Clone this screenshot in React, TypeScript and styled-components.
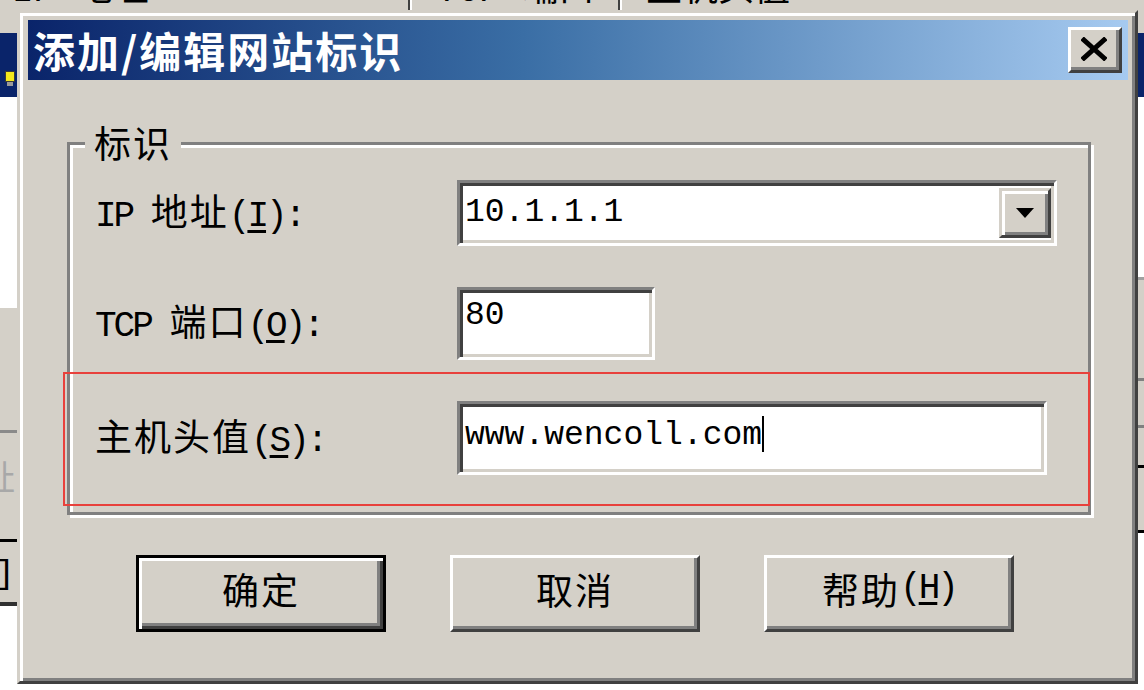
import styled, { createGlobalStyle } from 'styled-components'

const GlobalStyle = createGlobalStyle`
  html, body {
    margin: 0;
    padding: 0;
    background: #fff;
  }
  body {
    font-family: "Liberation Mono", "Noto Sans CJK SC", monospace;
  }
`

const Screen = styled.div`
  position: relative;
  width: 1144px;
  height: 690px;
  overflow: hidden;
  display: flex;
  flex-direction: column;
  background: #fff;
`

/* ---- the window behind the dialog ---- */

const HeaderStrip = styled.div`
  flex: 0 0 10px;
  display: flex;
  background: #d4d0c8;
  overflow: hidden;
`

const HeaderCell = styled.div<{ $w: number; $pad: number }>`
  flex: 0 0 ${p => p.$w}px;
  padding-left: ${p => p.$pad}px;
  box-sizing: border-box;
  font-size: 36px;
  line-height: 36px;
  margin-top: -26px;
  white-space: nowrap;
  color: #000;
`

const HeaderSep = styled.div`
  flex: 0 0 2px;
  background: #404040;
  border-right: 2px solid #fff;
`

const Below = styled.div`
  flex: 1;
  display: flex;
`

const Strip = styled.div<{ $w: number }>`
  flex: 0 0 ${p => p.$w}px;
  display: flex;
  flex-direction: column;
  overflow: hidden;
`

const Middle = styled.div`
  flex: 1;
  background: #fff;
`

const Band = styled.div<{ $h?: number; $bg: string }>`
  flex: ${p => (p.$h != null ? `0 0 ${p.$h}px` : '1 1 auto')};
  background: ${p => p.$bg};
  overflow: hidden;
  display: flex;
  justify-content: flex-end;
`

const TreeIcon = styled.div`
  width: 8px;
  height: 9px;
  margin: 38px 2px 0 0;
  background: #f4e81c;
  border: 1px solid #3a3a3a;
  box-shadow: 0 6px 0 -2px #9a9a9a;
`

const GhostGlyph = styled.span<{ $color: string; $top: number }>`
  font-size: 34px;
  line-height: 36px;
  margin-top: ${p => p.$top}px;
  margin-right: 2px;
  color: ${p => p.$color};
  white-space: nowrap;
`

/* ---- dialog ---- */

const Dialog = styled.div`
  position: absolute;
  left: 17px;
  top: 10px;
  width: 1121px;
  height: 674px;
  box-sizing: border-box;
  background: #d4d0c8;
  border: 3px solid;
  border-color: #d4d0c8 #404040 #404040 #d4d0c8;
  box-shadow: inset 3px 3px 0 #fff, inset -3px -3px 0 #808080;
  padding: 7px 7px 0 8px;
  display: flex;
  flex-direction: column;
`

const TitleBar = styled.div`
  height: 60px;
  flex-shrink: 0;
  display: flex;
  align-items: center;
  justify-content: space-between;
  padding: 0 6px 0 5px;
  background: linear-gradient(to right, #0a246a 0%, #3a6ea5 45%, #a6caf0 100%);
`

const TitleText = styled.div`
  font-family: "Noto Sans CJK SC", sans-serif;
  font-weight: 700;
  font-size: 42px;
  line-height: 48px;
  color: #fff;
  letter-spacing: 2px;
`

const CloseButton = styled.div`
  width: 54px;
  height: 46px;
  box-sizing: border-box;
  background: #d4d0c8;
  border: 3px solid;
  border-color: #fff #404040 #404040 #fff;
  box-shadow: inset -3px -3px 0 #808080;
  display: flex;
  align-items: center;
  justify-content: center;
  padding: 0 3px 3px 0;
`

const GroupBox = styled.div`
  position: relative;
  margin: 62px 37px 0 39px;
  height: 373px;
  box-sizing: border-box;
  border: 3px solid #808080;
  box-shadow: inset 3px 3px 0 #fff, 3px 3px 0 #fff;
  padding: 35px 0 0 25px;
  display: flex;
  flex-direction: column;
  gap: 41px;
`

const Legend = styled.div`
  position: absolute;
  left: 15px;
  top: -24px;
  padding: 0 9px;
  background: #d4d0c8;
  font-family: "Noto Sans CJK SC", sans-serif;
  font-size: 37px;
  line-height: 42px;
  letter-spacing: 2px;
  color: #000;
`

const Row = styled.div`
  display: grid;
  grid-template-columns: 362px auto;
  align-items: center;
`

const FieldLabel = styled.div`
  font-size: 36px;
  line-height: 42px;
  letter-spacing: -3px;
  color: #000;
  white-space: pre;
`

const Han = styled.span`
  font-family: "Noto Sans CJK SC", sans-serif;
  font-size: 37px;
  letter-spacing: 2px;
`

const Key = styled.span`
  text-decoration: underline;
  text-decoration-thickness: 3px;
  text-underline-offset: 4px;
`

const Sunken = styled.div<{ $w: number; $h: number; $padTop?: number }>`
  width: ${p => p.$w}px;
  height: ${p => p.$h}px;
  box-sizing: border-box;
  background: #fff;
  border: 3px solid;
  border-color: #808080 #fff #fff #808080;
  box-shadow: inset 3px 3px 0 #404040, inset -3px -3px 0 #d4d0c8;
  display: flex;
  align-items: ${p => (p.$padTop != null ? 'flex-start' : 'center')};
  padding: ${p => (p.$padTop != null ? `${p.$padTop}px 3px 0 5px` : '0 3px 0 5px')};
  font-size: 33px;
  line-height: 36px;
  color: #000;
  white-space: pre;
`

const Value = styled.span`
  flex: 1;
`

const Caret = styled.span`
  display: inline-block;
  width: 2px;
  height: 36px;
  margin-top: -2px;
  background: #000;
`

const DropButton = styled.div`
  width: 52px;
  height: 50px;
  box-sizing: border-box;
  background: #d4d0c8;
  border: 3px solid;
  border-color: #d4d0c8 #404040 #404040 #d4d0c8;
  box-shadow: inset 3px 3px 0 #fff, inset -3px -3px 0 #808080;
  display: flex;
  align-items: center;
  justify-content: center;
`

const Arrow = styled.div`
  width: 0;
  height: 0;
  border-left: 9px solid transparent;
  border-right: 9px solid transparent;
  border-top: 10px solid #000;
`

const ButtonRow = styled.div`
  display: flex;
  gap: 64px;
  margin-top: 40px;
  padding-left: 108px;
`

const PushButton = styled.div<{ $default?: boolean }>`
  width: 250px;
  height: 77px;
  box-sizing: border-box;
  background: #d4d0c8;
  border: 3px solid;
  border-color: ${p => (p.$default ? '#000' : '#fff #404040 #404040 #fff')};
  box-shadow: ${p =>
    p.$default
      ? 'inset 3px 3px 0 #fff, inset -3px -3px 0 #404040, inset -6px -6px 0 #808080'
      : 'inset -3px -3px 0 #808080'};
  display: flex;
  align-items: center;
  justify-content: center;
  padding-bottom: 10px;
  font-size: 36px;
  line-height: 42px;
  letter-spacing: -3px;
  color: #000;
  white-space: pre;
`

const Annotation = styled.div`
  position: absolute;
  left: 63px;
  top: 372px;
  width: 1027px;
  height: 134px;
  box-sizing: border-box;
  border: 2px solid #e8413c;
  pointer-events: none;
`

function Backdrop (): JSX.Element {
  return (
    <>
      <HeaderStrip>
        <HeaderCell $w={408} $pad={12}>IP 地址</HeaderCell>
        <HeaderSep />
        <HeaderCell $w={206} $pad={24}>TCP 端口</HeaderCell>
        <HeaderSep />
        <HeaderCell $w={500} $pad={24}>主机头值</HeaderCell>
      </HeaderStrip>
      <Below>
        <Strip $w={17}>
          <Band $h={23} $bg="#d4d0c8" />
          <Band $h={64} $bg="#0a246a"><TreeIcon /></Band>
          <Band $h={208} $bg="#fff" />
          <Band $h={3} $bg="#fff" />
          <Band $h={122} $bg="#d4d0c8" />
          <Band $h={3} $bg="#8a8a8a" />
          <Band $h={106} $bg="#d4d0c8"><GhostGlyph $color="#a8a8a8" $top={30}>址</GhostGlyph></Band>
          <Band $h={3} $bg="#000" />
          <Band $h={60} $bg="#d4d0c8"><GhostGlyph $color="#000" $top={14}>]</GhostGlyph></Band>
          <Band $h={4} $bg="#303030" />
          <Band $bg="#fff" />
        </Strip>
        <Middle />
        <Strip $w={6}>
          <Band $h={23} $bg="#d4d0c8" />
          <Band $h={64} $bg="#0a246a" />
          <Band $h={180} $bg="#fff" />
          <Band $h={3} $bg="#a0a0a0" />
          <Band $h={98} $bg="#d4d0c8" />
          <Band $h={3} $bg="#808080" />
          <Band $h={44} $bg="#d4d0c8" />
          <Band $h={3} $bg="#808080" />
          <Band $h={37} $bg="#d4d0c8" />
          <Band $h={3} $bg="#000" />
          <Band $h={62} $bg="#d4d0c8" />
          <Band $h={3} $bg="#000" />
          <Band $bg="#fff" />
        </Strip>
      </Below>
    </>
  )
}

function CloseGlyph (): JSX.Element {
  return (
    <svg width="26" height="24" viewBox="0 0 26 24">
      <path d="M3 3 L23 21 M23 3 L3 21" stroke="#000" strokeWidth="5" strokeLinecap="square" />
    </svg>
  )
}

export default function App (): JSX.Element {
  return (
    <Screen>
      <GlobalStyle />
      <Backdrop />
      <Dialog>
        <TitleBar>
          <TitleText>添加/编辑网站标识</TitleText>
          <CloseButton><CloseGlyph /></CloseButton>
        </TitleBar>

        <GroupBox>
          <Legend>标识</Legend>
          <Row>
            <FieldLabel>IP <Han>地址</Han>(<Key>I</Key>):</FieldLabel>
            <Sunken $w={600} $h={66}>
              <Value>10.1.1.1</Value>
              <DropButton><Arrow /></DropButton>
            </Sunken>
          </Row>
          <Row>
            <FieldLabel>TCP <Han>端口</Han>(<Key>O</Key>):</FieldLabel>
            <Sunken $w={198} $h={73} $padTop={8}>
              <Value>80</Value>
            </Sunken>
          </Row>
          <Row>
            <FieldLabel><Han>主机头值</Han>(<Key>S</Key>):</FieldLabel>
            <Sunken $w={590} $h={74} $padTop={14}>
              <span>www.wencoll.com</span><Caret />
            </Sunken>
          </Row>
        </GroupBox>

        <ButtonRow>
          <PushButton $default><Han>确定</Han></PushButton>
          <PushButton><Han>取消</Han></PushButton>
          <PushButton><Han>帮助</Han>(<Key>H</Key>)</PushButton>
        </ButtonRow>
      </Dialog>
      <Annotation />
    </Screen>
  )
}
